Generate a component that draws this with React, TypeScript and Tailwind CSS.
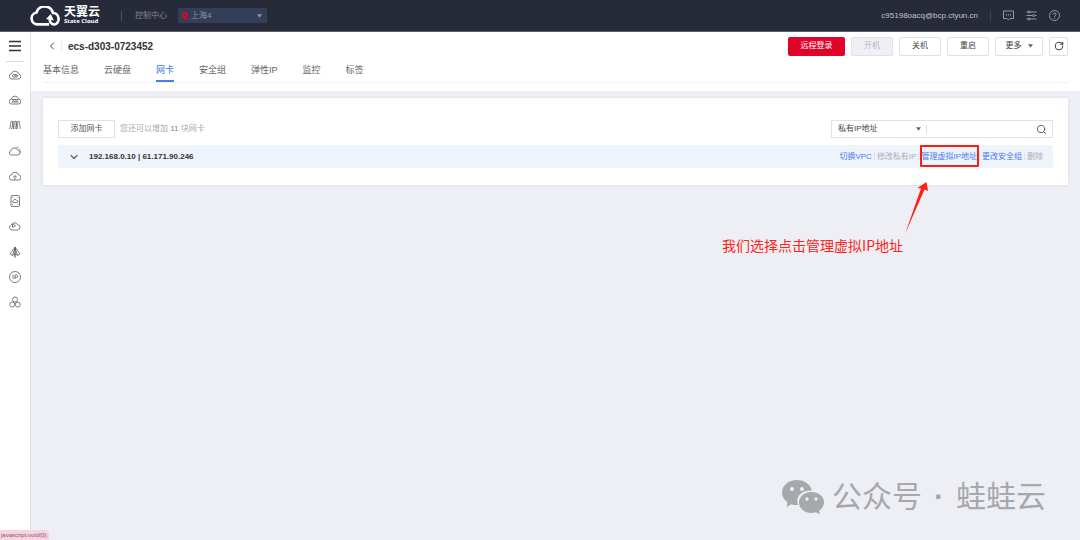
import React from 'react';
import { ChevronDown, ChevronLeft, RotateCw, Search } from 'lucide-react';

const tabs = ['基本信息', '云硬盘', '网卡', '安全组', '弹性IP', '监控', '标签'];

// Sidebar service icons, all drawn on a 24x24 grid
const services = [
  {
    name: '弹性云主机',
    icon: (
      <>
        <path d="M6 20a5 5 0 0 1-1.500-10 7.800 7.800 0 0 1 15 0A5 5 0 0 1 18 20z" />
        <rect x="7" y="11" width="10" height="5" rx="2.5" />
        <path d="M10 13.5h7" />
      </>
    ),
  },
  {
    name: '物理机',
    icon: (
      <>
        <path d="M6 20a5 5 0 0 1-1.5-10 7.8 7.8 0 0 1 15 0A5 5 0 0 1 18 20z" />
        <path d="M5 11h14M5 16h14M8 11v5M12 11v5M16 11v5" />
      </>
    ),
  },
  {
    name: '弹性伸缩',
    icon: (
      <>
        <path d="M1 20c3-3 1-14 4-16s3 13 5 16M8 20c3-3 1-14 4-16s3 13 5 16M15 20c3-3 1-14 4-16s2 13 4 16" />
        <path d="M5 20c3-3 1-12 4-16M12 20c3-3 1-12 4-16" />
      </>
    ),
  },
  {
    name: '云硬盘',
    icon: (
      <>
        <path d="M5 20a4.4 4.4 0 0 1-1-8.6A6.8 6.8 0 0 1 17 10a5 5 0 0 1 0 10z" />
        <path d="M14 5a5 5 0 0 1 7 4c3 2 2 6 0 8" strokeWidth="1" />
      </>
    ),
  },
  {
    name: '云备份',
    icon: (
      <>
        <path d="M8 20H6a5 5 0 0 1-1.5-10 7.8 7.8 0 0 1 15 0A5 5 0 0 1 18 20h-2" />
        <path d="M12 20v-8M8 15l4-4 4 4M8 20h8" />
      </>
    ),
  },
  {
    name: '镜像服务',
    icon: (
      <>
        <rect x="4" y="1" width="17" height="22" rx="2" />
        <path d="M9 15a2 2 0 0 1 0-4 3.4 3.4 0 0 1 6.500 0 2 2 0 0 1 0 4z" />
        <path d="M6 5h2M17 5h2M6 19h2M17 19h2" />
      </>
    ),
  },
  {
    name: '虚拟私有云',
    icon: (
      <>
        <path d="M6 20a5 5 0 0 1-1.5-9.700A7 7 0 0 1 17 9a5.600 5.600 0 0 1 1 11z" />
        <path d="M7 15V8l6 3.500L7 15" />
      </>
    ),
  },
  {
    name: '弹性负载均衡',
    icon: (
      <>
        <path d="M12 2L2 16l5 3 5-4 5 4 5-3z" />
        <path d="M12 2v21" strokeWidth="2.500" />
        <path d="M12 4L7 19M12 4l5 15" />
      </>
    ),
  },
  {
    name: '弹性IP',
    icon: (
      <>
        <circle cx="12" cy="12" r="11" />
        <path d="M8 8v8M12 16V8h3a2.5 2.5 0 0 1 0 5h-3" />
      </>
    ),
  },
  {
    name: '对象存储',
    icon: (
      <>
        <circle cx="12" cy="7" r="5" />
        <circle cx="6.5" cy="17" r="5" />
        <circle cx="17.5" cy="17" r="5" />
      </>
    ),
  },
];

const Caret: React.FC<{ className?: string }> = ({ className = '' }) => (
  <svg viewBox="0 0 6 4" className={`w-[5px] h-1 fill-current pointer-events-none ${className}`} aria-hidden="true">
    <path d="M0 0h6L3 4z" />
  </svg>
);

const Logo: React.FC = () => (
  <a href="#" aria-label="天翼云 State Cloud" className="flex items-center gap-[3px] text-white">
    <svg viewBox="0 0 31 20" className="w-[31px] h-5" fill="none" stroke="currentColor" strokeWidth="2.6">
      <path d="M19 18.400H7.500a6 6 0 0 1-1-11.900A8.600 8.600 0 0 1 23 7a5.900 5.900 0 0 1 1.500 11.500c-3.500 0-5.500-3-4.500-6.500" />
      <path d="M16 13l4.800-5 3 6.500z" fill="currentColor" stroke="none" />
    </svg>
    <span className="flex flex-col">
      <span className="text-[12px] leading-[12px] font-bold">天翼云</span>
      <span className="text-[6px] leading-[7px] font-bold font-['Open_Sans',sans-serif]">State Cloud</span>
    </span>
  </a>
);

const Header: React.FC = () => (
  <header className="flex items-center h-8 shrink-0 pl-[30px] pr-5 bg-[#272a39] border-b border-[#5d5f6c] text-[8px] text-[#a4a5ad]">
    <Logo />
    <span className="w-px h-[10px] ml-[21px] mr-[13px] bg-[#4a4c5a]" />
    <a href="#" className="text-[#85868f]">控制中心</a>
    <div className="relative flex items-center ml-[11px]">
      <svg viewBox="0 0 12 16" className="absolute left-1 w-[6px] h-2 pointer-events-none" aria-hidden="true">
        <path fillRule="evenodd" fill="#e60027" d="M6 0a6 6 0 0 0-6 6c0 4 6 10 6 10s6-6 6-10a6 6 0 0 0-6-6zm0 3.5a2.500 2.500 0 1 1 0 5 2.500 2.500 0 0 1 0-5z" />
      </svg>
      <select aria-label="资源池" className="appearance-none w-[89px] h-[15px] pl-[13px] rounded-[1px] bg-[#343e58] text-[#8f95a5]">
        <option>上海4</option>
      </select>
      <Caret className="absolute right-[5px] text-[#9498a4]" />
    </div>
    <span className="ml-auto text-[#c3c3c8]">c95198oacq@bcp.ctyun.cn</span>
    <span className="w-px h-[10px] mx-3 bg-[#44464f]" />
    <div className="flex items-center gap-3">
      <button aria-label="消息">
        <svg viewBox="0 0 22 22" className="block size-[11px]" fill="none" stroke="currentColor" strokeWidth="1.8">
          <path d="M1 2h20v15h-7l-3 3-3-3H1z" />
          <path d="M6 9.5h2M10 9.5h2M14 9.5h2" strokeWidth="2.5" />
        </svg>
      </button>
      <button aria-label="设置">
        <svg viewBox="0 0 22 22" className="block size-[11px]" fill="none" stroke="currentColor" strokeWidth="1.8">
          <path d="M1 4h3M8 4h13M1 11h12M17 11h4M1 18h3M8 18h13" />
          <circle cx="6" cy="4" r="2" />
          <circle cx="15" cy="11" r="2" />
          <circle cx="6" cy="18" r="2" />
        </svg>
      </button>
      <button aria-label="帮助">
        <svg viewBox="0 0 22 22" className="block size-[11px]" fill="none" stroke="currentColor" strokeWidth="1.8">
          <circle cx="11" cy="11" r="10" />
          <path d="M8 9a3 3 0 1 1 4.5 2.5c-1 .6-1.5 1-1.5 2.5M11 15.5v2" />
        </svg>
      </button>
    </div>
  </header>
);

const Sidebar: React.FC = () => (
  <nav aria-label="服务" className="flex flex-col items-center w-[31px] shrink-0 pr-px bg-white border-r border-[#dfe1e8]">
    <button aria-label="菜单" className="mt-2">
      <svg viewBox="0 0 12 12" className="block size-3" stroke="#333" strokeWidth="1.4">
        <path d="M0 1.500h12M0 6h12M0 10.500h12" />
      </svg>
    </button>
    <span className="w-[18px] h-px mt-[9px] bg-[#dcdee6]" />
    <ul className="grid auto-rows-fr h-[253px]">
      {services.map((service) => (
        <li key={service.name} className="flex items-center">
          <a href="#" aria-label={service.name} className="text-[#555]">
            <svg viewBox="0 0 24 24" className="block size-3" fill="none" stroke="currentColor" strokeWidth="1.5">
              {service.icon}
            </svg>
          </a>
        </li>
      ))}
    </ul>
  </nav>
);

const InstanceHeader: React.FC = () => {
  const button = 'h-[19px] rounded-[2px] border border-[#dfe1e6]';

  return (
    <section className="shrink-0 h-[59px] px-3 bg-white">
      <div className="flex items-center h-7 text-[#444] text-[8px]">
        <button aria-label="返回" className="ml-[3px]">
          <ChevronLeft className="size-3" strokeWidth={2} />
        </button>
        <span className="w-px h-[10px] mx-[3px] bg-[#ececf0]" />
        <h1 className="ml-[3px] text-[10px] font-bold text-[#333]">ecs-d303-0723452</h1>
        <div className="flex gap-[6px] ml-auto">
          <button className="w-[57px] h-[19px] rounded-[2px] bg-[#e0042b] text-white">远程登录</button>
          <button disabled className={`w-[42px] bg-[#eef0f6] text-[#b4b6bc] ${button}`}>开机</button>
          <button className={`w-[42px] ${button}`}>关机</button>
          <button className={`w-[42px] ${button}`}>重启</button>
          <button className={`flex items-center justify-center gap-[6px] w-12 ${button}`}>
            更多
            <Caret className="text-[#666]" />
          </button>
          <button aria-label="刷新" className={`flex items-center justify-center w-[19px] ${button}`}>
            <RotateCw className="size-[10px]" strokeWidth={2.5} />
          </button>
        </div>
      </div>
      <div role="tablist" className="flex gap-[25px] h-[23px] border-b border-[#f0f1f4] text-[9px] text-[#666]">
        {tabs.map((tab) => (
          <button
            key={tab}
            role="tab"
            aria-selected={tab === '网卡'}
            className={tab === '网卡' ? 'pt-px border-b-2 border-[#4a7dec] text-[#3f76ee]' : 'pb-px'}
          >
            {tab}
          </button>
        ))}
      </div>
    </section>
  );
};

const Divider: React.FC = () => <span className="w-px h-2 bg-[#dcdfe8]" />;

const NetworkCards: React.FC = () => (
  <section className="mx-3 mt-[7px] px-[15px] pt-[22px] pb-[17px] bg-white rounded-[1px] shadow-[0_0_3px_rgba(40,50,90,0.12)] text-[8px]">
    <div className="flex items-center">
      <button className="w-[57px] h-[18px] border border-[#dfe1e6] text-[#555]">添加网卡</button>
      <p className="ml-[5px] text-[#aaa]">
        您还可以增加 <span className="text-[#888]">11</span> 块网卡
      </p>
      <div className="flex items-center w-[222px] h-[18px] ml-auto border border-[#dfe1e6]">
        <div className="relative flex items-center">
          <select aria-label="搜索条件" className="appearance-none w-[94px] h-4 pl-[6px] text-[#444]">
            <option>私有IP地址</option>
          </select>
          <Caret className="absolute right-[5px] text-[#666]" />
        </div>
        <Divider />
        <input aria-label="搜索关键字" className="flex-1 min-w-0 h-4 px-1 outline-none" />
        <button aria-label="搜索" className="mr-[5px] text-[#555]">
          <Search className="size-[11px]" strokeWidth={2} />
        </button>
      </div>
    </div>

    <div className="flex items-center h-[23px] mt-[7px] pl-[10px] pr-[10px] bg-[#eff3fc] rounded-[2px]">
      <button aria-label="展开" className="text-[#666]">
        <ChevronDown className="size-3" strokeWidth={2.5} />
      </button>
      <h2 className="ml-[9px] font-bold text-[#333]">192.168.0.10 | 61.171.90.246</h2>
      <div className="flex items-center gap-[2px] ml-auto text-[#4a7cf0]">
        <a href="#">切换VPC</a>
        <Divider />
        <button disabled className="text-[#aaaeb8]">修改私有IP</button>
        <Divider />
        <div className="relative">
          <a href="#">管理虚拟IP地址</a>
          {/* Highlight and pointer to the link */}
          <span className="absolute -left-px -right-[2px] -top-[6px] h-[22px] border-[2px] rounded-[1px] border-[#ff1d12]" />
          <svg viewBox="0 0 24 54" className="absolute right-[49px] top-[30px] w-6 h-[54px]" aria-hidden="true">
            <path d="M1 53L17 7.500l-3.500-.5L22.500 1l1.500 9-3.500-1.500z" fill="#ff1d12" />
          </svg>
          <p className="absolute right-[74px] top-[84px] whitespace-nowrap text-[14px] leading-5 font-['Noto_Sans_CJK_SC',sans-serif] text-[#ff2318]">
            我们选择点击管理虚拟IP地址
          </p>
        </div>
        <Divider />
        <a href="#">更改安全组</a>
        <Divider />
        <button disabled className="text-[#aaaeb8]">删除</button>
      </div>
    </div>
  </section>
);

const Watermark: React.FC = () => (
  <div className="flex items-center self-end mt-auto mr-[34px] mb-[25px] text-[#a7a8ac]">
    <svg viewBox="0 0 42 35" className="w-[42px] h-[35px]" aria-hidden="true">
      <path
        fill="currentColor"
        d="M15 0C6.5 0 0 5.500 0 12.500c0 4 2 7.500 5.500 9.700L4.500 27l5-2.800c2 .7 4 1 6.500.8C13 16 20 10 30 10.500 28.500 4.500 22.500 0 15 0z"
      />
      <path
        fill="currentColor"
        d="M29.500 12C22.500 12 17 16.500 17 22.500S22.500 33 29.500 33c1.500 0 3-.3 4.500-.7l4 2.200-1-3.700c3-2 5-5 5-8.300C42 16.500 36.500 12 29.500 12z"
      />
      <g fill="#edeff5">
        <circle cx="10" cy="9" r="2" />
        <circle cx="20" cy="9" r="2" />
        <circle cx="25" cy="19" r="1.7" />
        <circle cx="34" cy="19" r="1.7" />
      </g>
    </svg>
    <p className="flex gap-3 ml-2 text-[30px] leading-9">
      <span>公众号</span>
      <span className="font-bold">·</span>
      <span>蛙蛙云</span>
    </p>
  </div>
);

const App: React.FC = () => {
  return (
    <div className="relative flex flex-col min-h-screen bg-[#edeff5] font-['Liberation_Sans','Noto_Sans_CJK_SC',sans-serif]">
      <Header />
      <div className="flex flex-1">
        <Sidebar />
        <main className="flex flex-col flex-1 min-w-0">
          <InstanceHeader />
          <NetworkCards />
          <Watermark />
        </main>
      </div>
      <div className="absolute left-0 bottom-0 h-[10px] px-px rounded-tr-[2px] bg-[#f8d4e2] text-[6px] leading-[10px] text-[#7a5a68] whitespace-nowrap">
        javascript:void(0);
      </div>
    </div>
  );
};

export default App;
